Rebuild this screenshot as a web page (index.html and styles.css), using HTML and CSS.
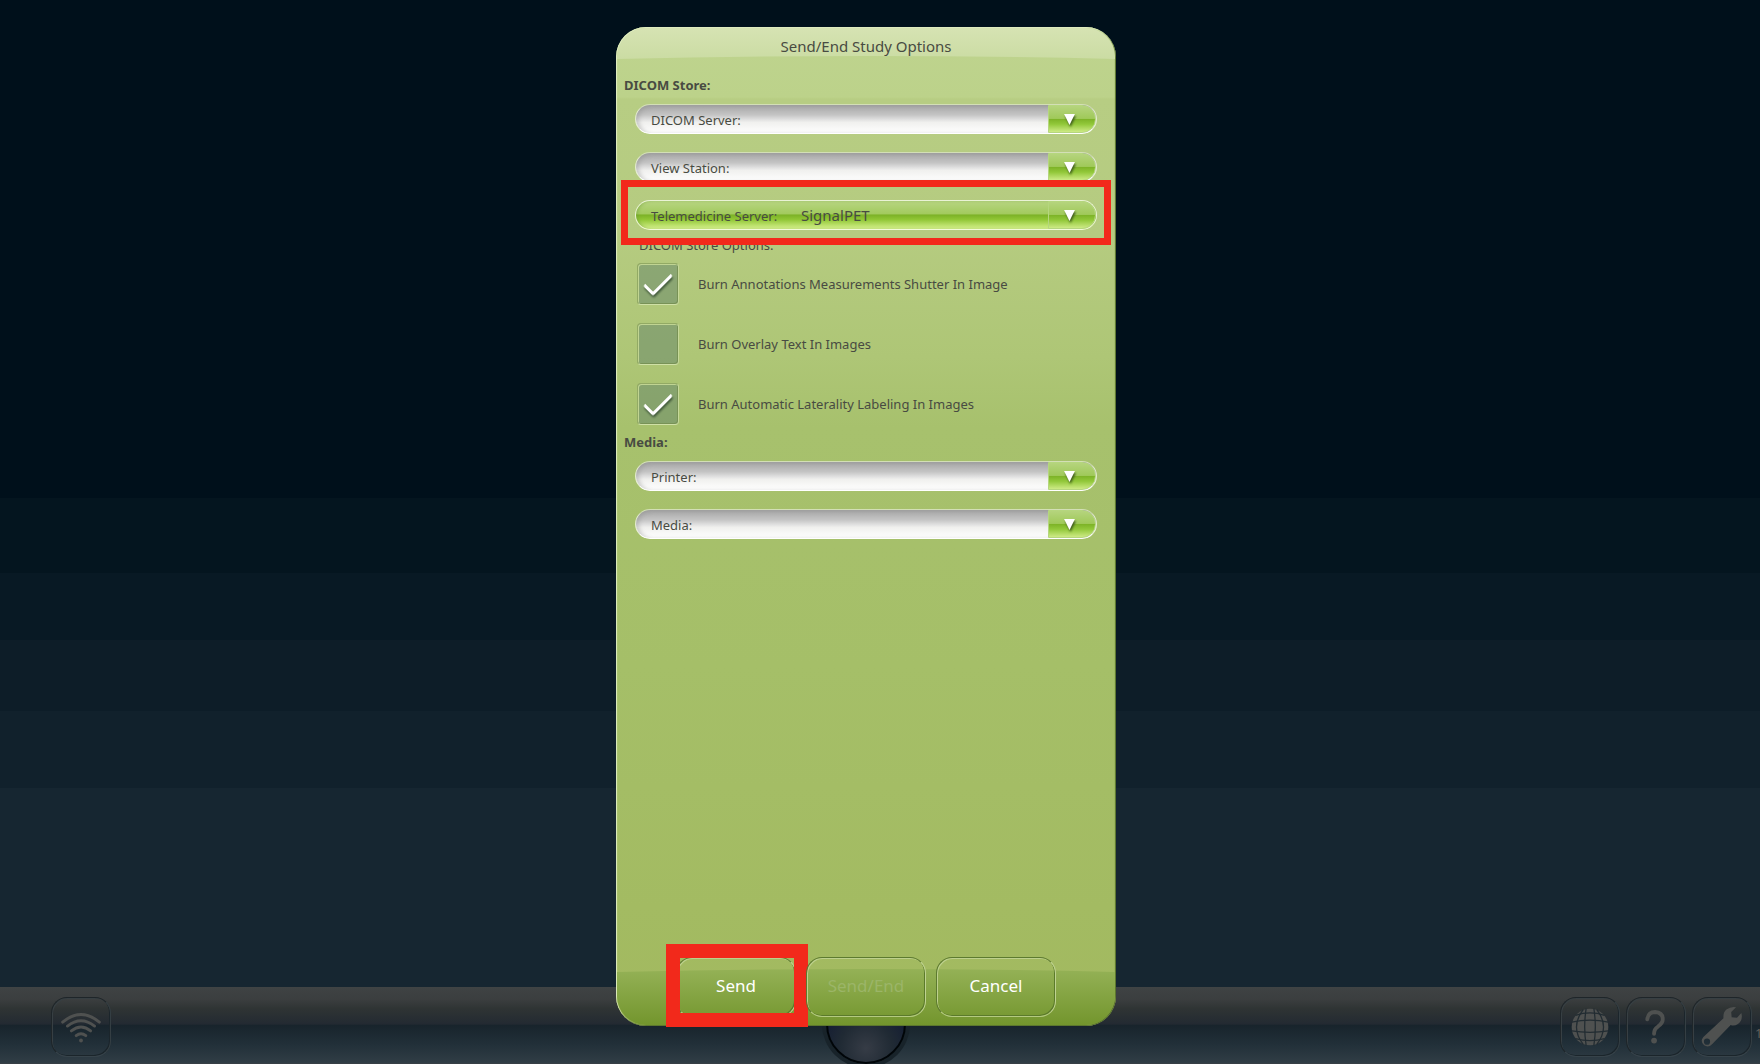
FILE: index.html
```html
<!DOCTYPE html>
<html lang="en">
<head>
<meta charset="utf-8">
<title>Send/End Study Options</title>
<link rel="stylesheet" href="styles.css">
</head>
<body>
<div class="screen">
  <footer class="taskbar">
    <span class="knob"></span>
    <button class="tool" type="button" aria-label="Wireless">
      <svg class="tool-icon" viewBox="0 0 60 60" aria-hidden="true">
        <g fill="none" stroke="#4f5150" stroke-width="3" stroke-linecap="round">
          <path d="M11 25Q30 9 49 25"/><path d="M16 29Q30 18 44 29"/><path d="M20 34Q30 26 40 34"/><path d="M25 39Q30 35 35 39"/>
        </g>
        <circle cx="30" cy="44" r="2" fill="#4f5150"/>
      </svg>
    </button>
    <div class="tools">
      <button class="tool" type="button" aria-label="Language">
        <svg class="tool-icon" viewBox="0 0 60 60" aria-hidden="true">
          <circle cx="30" cy="30" r="19" fill="#4f5150"/>
          <g fill="none" stroke="#222c32" stroke-width="1.3">
            <path d="M26 11Q23 30 26 49M34 11Q37 30 34 49M23 12Q9 30 23 48M37 12Q51 30 37 48"/>
            <path d="M15 18Q30 13 45 18M11 25Q30 21 49 25M11 34Q30 37 49 34M15 42Q30 46 45 42"/>
          </g>
        </svg>
      </button>
      <button class="tool" type="button" aria-label="Help">
        <svg class="tool-icon" viewBox="0 0 60 60" aria-hidden="true">
          <path d="M21 22Q22 14.500 29 14.500Q37 15 37 22Q37 26 32 29.500Q28 32 28 37" fill="none" stroke="#4f5150" stroke-width="4" stroke-linecap="round"/>
          <circle cx="28" cy="44" r="3" fill="#4f5150"/>
        </svg>
      </button>
      <button class="tool" type="button" aria-label="Settings">
        <svg class="tool-icon" viewBox="0 0 60 60" aria-hidden="true">
          <path fill="#4f5150" fill-rule="evenodd" d="M44.500 9.500L39.500 14.500L40 20L45.500 20.500L50 15.500Q52 23 46.500 27Q42.500 29.500 39 28L20 47.500Q16 52 11.500 49Q7 45 10.500 40.500L31.500 21Q31 15 34.500 12Q39 8.500 44.500 9.500ZM14.500 42A3.200 3.200 0 1 0 14.500 48.400A3.200 3.200 0 1 0 14.500 42Z"/>
        </svg>
      </button>
    </div>
    <span class="clock">1</span>
  </footer>
  <main class="stage">
    <form class="dialog" aria-labelledby="dialog-title">
      <svg class="gloss gloss-top" viewBox="0 0 500 32" preserveAspectRatio="none" aria-hidden="true">
        <defs>
          <linearGradient id="header-shade" x1="0" y1="0" x2="0" y2="1">
            <stop offset="0" stop-color="#d6e3b3"/>
            <stop offset="1" stop-color="#cbdca3"/>
          </linearGradient>
        </defs>
        <path d="M0 0H500V31Q250 25 0 31Z" fill="url(#header-shade)"/>
      </svg>
      <svg class="gloss gloss-bottom" viewBox="0 0 500 56" preserveAspectRatio="none" aria-hidden="true">
        <defs>
          <linearGradient id="footer-shade" x1="0" y1="0" x2="0" y2="1">
            <stop offset="0" stop-color="#94b156"/>
            <stop offset="1" stop-color="#73952d"/>
          </linearGradient>
        </defs>
        <path d="M0 3Q250 -3 500 3V56H0Z" fill="url(#footer-shade)"/>
      </svg>
      <h1 class="dialog-title" id="dialog-title">Send/End Study Options</h1>
      <section class="group">
        <h2 class="group-title">DICOM Store:</h2>
        <div class="fields">
          <div class="field">
            <label class="field-label" for="dicom">DICOM Server:</label>
            <select class="field-select" id="dicom"><option></option></select>
            <span class="field-arrow"><svg class="arrow" viewBox="0 0 12 12" aria-hidden="true"><path d="M1 1H11L6 11Z"/></svg></span>
          </div>
          <div class="field">
            <label class="field-label" for="view">View Station:</label>
            <select class="field-select" id="view"><option></option></select>
            <span class="field-arrow"><svg class="arrow" viewBox="0 0 12 12" aria-hidden="true"><path d="M1 1H11L6 11Z"/></svg></span>
          </div>
          <div class="field field-active">
            <label class="field-label" for="tele">Telemedicine Server:</label>
            <select class="field-select" id="tele"><option>SignalPET</option></select>
            <span class="field-arrow"><svg class="arrow" viewBox="0 0 12 12" aria-hidden="true"><path d="M1 1H11L6 11Z"/></svg></span>
            <span class="mark mark-field"></span>
          </div>
        </div>
        <h3 class="options-title">DICOM Store Options:</h3>
        <div class="checks">
          <label class="check"><input class="check-box" type="checkbox" checked><span>Burn Annotations Measurements Shutter In Image</span></label>
          <label class="check"><input class="check-box" type="checkbox"><span>Burn Overlay Text In Images</span></label>
          <label class="check"><input class="check-box" type="checkbox" checked><span>Burn Automatic Laterality Labeling In Images</span></label>
        </div>
      </section>
      <section class="group">
        <h2 class="group-title">Media:</h2>
        <div class="fields">
          <div class="field">
            <label class="field-label" for="printer">Printer:</label>
            <select class="field-select" id="printer"><option></option></select>
            <span class="field-arrow"><svg class="arrow" viewBox="0 0 12 12" aria-hidden="true"><path d="M1 1H11L6 11Z"/></svg></span>
          </div>
          <div class="field">
            <label class="field-label" for="media">Media:</label>
            <select class="field-select" id="media"><option></option></select>
            <span class="field-arrow"><svg class="arrow" viewBox="0 0 12 12" aria-hidden="true"><path d="M1 1H11L6 11Z"/></svg></span>
          </div>
        </div>
      </section>
      <div class="actions">
        <div class="action"><button class="btn" type="button">Send</button><span class="mark mark-send"></span></div>
        <div class="action"><button class="btn" type="button" disabled>Send/End</button></div>
        <div class="action"><button class="btn" type="button">Cancel</button></div>
      </div>
    </form>
  </main>
</div>
</body>
</html>
```
FILE: styles.css
```css
* { box-sizing: border-box; }

body {
  margin: 0;
  font-family: "Noto Sans", "Open Sans", sans-serif;
  font-size: 13px;
  line-height: 18px;
  color: #484b42;
}

.screen {
  display: grid;
  grid-template-rows: 1fr 77px;
  min-height: 100vh;
  overflow: hidden;
  background: linear-gradient(
    #00101b 498px, #04151f 498px, #04151f 573px, #081924 573px, #081924 640px,
    #0d1d28 640px, #0d1d28 711px, #11212c 711px, #11212c 788px, #162631 788px);
}

.stage {
  grid-area: 1 / 1 / 3 / 2;
  z-index: 1;
  display: flex;
  justify-content: center;
  padding: 27px 28px 38px 0;
  pointer-events: none;
}

/* Dialog */
.dialog {
  isolation: isolate;
  position: relative;
  display: flex;
  flex-direction: column;
  width: 500px;
  padding: 9px 0;
  border-radius: 30px;
  background: linear-gradient(#bfd48f, #bcd28a 70px, #b7cd83 72px, #b5cb80 210px, #aec676 330px, #a7c16d 400px, #a5bf68 640px, #a2b95f);
  box-shadow: inset 1px 1px 1px #e2eec4, inset -1px -1px 1px #55702a;
  pointer-events: auto;
}

.gloss {
  position: absolute;
  z-index: -1;
  left: 1px;
  width: calc(100% - 2px);
}

.gloss-top { top: 1px; height: 32px; border-radius: 29px 29px 0 0; }
.gloss-bottom { bottom: 1px; height: 56px; border-radius: 0 0 29px 29px; }

.dialog-title {
  margin: 0 0 20px;
  font-size: 15px;
  font-weight: 400;
  line-height: 20px;
  text-align: center;
}

.group-title {
  margin: 0 0 10px;
  padding-left: 8px;
  font-size: 13px;
}

.fields {
  display: grid;
  gap: 18px;
  padding: 0 19px;
}

.field {
  position: relative;
  display: flex;
  align-items: stretch;
  height: 30px;
  border: 1px solid #e4eccf;
  border-top-color: #d3dfb6;
  border-bottom-color: #fff;
  border-radius: 15px;
  background: linear-gradient(#a6a6a6, #c4c4c4 35%, #e0e0e0 52%, #f0f0ee 62%, #fff);
  box-shadow: inset 3px 1px 4px #8a8a8a66;
}

.field-label {
  width: 165px;
  padding-left: 15px;
  line-height: 30px;
}

.field-select {
  flex: 1;
  min-width: 0;
  padding: 0;
  border: 0;
  appearance: none;
  background: none;
  color: inherit;
  font-family: inherit;
  font-size: 15px;
  line-height: 20px;
}

.field-arrow {
  display: flex;
  align-items: center;
  width: 48px;
  padding-left: 14px;
  border: 1px solid #b5d67e;
  border-radius: 0 14px 14px 0;
  background: linear-gradient(#b5d47d, #a0c95a 48%, #7cb226 50%, #92c83a 70%, #cdea85);
}

.arrow {
  width: 13px;
  height: 13px;
  fill: #fff;
  filter: drop-shadow(1px 2px 1px #3d5a1a);
}

.field-active {
  border-color: #eaf3d5;
  border-bottom-color: #f3fbd8;
  background: linear-gradient(#b8d582, #a2ca5e 46%, #7cb226 50%, #90c635 66%, #d8f28f);
  box-shadow: inset 2px 0 3px #6d9a3a66;
}

.options-title {
  margin: 6px 0 9px;
  padding-left: 23px;
  font-size: 13px;
  font-weight: 400;
}

.checks {
  display: grid;
  gap: 18px;
  justify-items: start;
  margin-bottom: 8px;
  padding-left: 21px;
}

.check {
  display: flex;
  align-items: center;
  gap: 19px;
}

.check-box {
  appearance: none;
  display: grid;
  place-items: center;
  width: 42px;
  height: 42px;
  margin: 0;
  border: 1px solid #92aa64;
  border-right-color: #c6d99a;
  border-bottom-color: #cfe0a6;
  border-radius: 4px;
  background: #64846a80;
  box-shadow: inset 1px 1px 0 #c0d492, inset -1px -1px 0 #789256;
}

.check-box:checked::before {
  content: "";
  width: 25px;
  height: 11px;
  margin-top: -6px;
  border: solid #fff;
  border-width: 0 0 3px 3px;
  border-radius: 2px;
  transform: rotate(-45deg);
  filter: drop-shadow(-1px 2px 1px #3e5638);
}

.actions {
  display: flex;
  justify-content: center;
  gap: 10px;
  margin-top: auto;
}

.action { position: relative; }

.btn {
  display: block;
  width: 120px;
  height: 60px;
  padding: 0 0 4px;
  border: 1px solid #5d7a30;
  border-right-color: #bfd291;
  border-bottom-color: #b4ca80;
  border-radius: 16px;
  background: none;
  box-shadow: inset 1px 1px 0 #bdd08d, inset -1px -1px 0 #5b7a2b;
  color: #fff;
  font-family: inherit;
  font-size: 17px;
}

.btn:disabled { color: #9bb568; }

.mark {
  position: absolute;
  border: 7px solid #f2291b;
  pointer-events: none;
}

.mark-field { inset: -21px -15px -16px; }
.mark-send { inset: -13px -12px -10px -10px; border-width: 14px; }

/* Taskbar */
.taskbar {
  grid-area: 2 / 1;
  position: relative;
  display: flex;
  align-items: flex-start;
  padding: 10px 0 0 51px;
  background: linear-gradient(#3f4344, #3b3e3f 16%, #2f3434 28%, #232a32 48%, #18242c 50%, #223039 75%, #303d45 98%, #3a4045);
}

.tools {
  display: flex;
  gap: 6px;
  margin-left: auto;
}

.tool {
  width: 60px;
  height: 60px;
  padding: 0;
  border: 1px solid #1e2529;
  border-right-color: #343e43;
  border-bottom-color: #37434a;
  border-radius: 16px;
  background: none;
  box-shadow: inset 1px 1px 0 #373f43, inset -1px -1px 0 #1b252b;
}

.tool-icon {
  display: block;
  width: 58px;
  height: 58px;
}

.clock {
  width: 8px;
  padding-left: 3px;
  color: #62605c;
  line-height: 72px;
}

.knob {
  position: absolute;
  top: -3px;
  left: calc(50% - 54px);
  width: 80px;
  height: 80px;
  border: 2px solid #000508;
  border-radius: 50%;
  background: radial-gradient(circle at 50% 82%, #363c46, #202a34 36%, #161f33 60%);
  box-shadow: 0 0 0 4px #18232a;
}
```
